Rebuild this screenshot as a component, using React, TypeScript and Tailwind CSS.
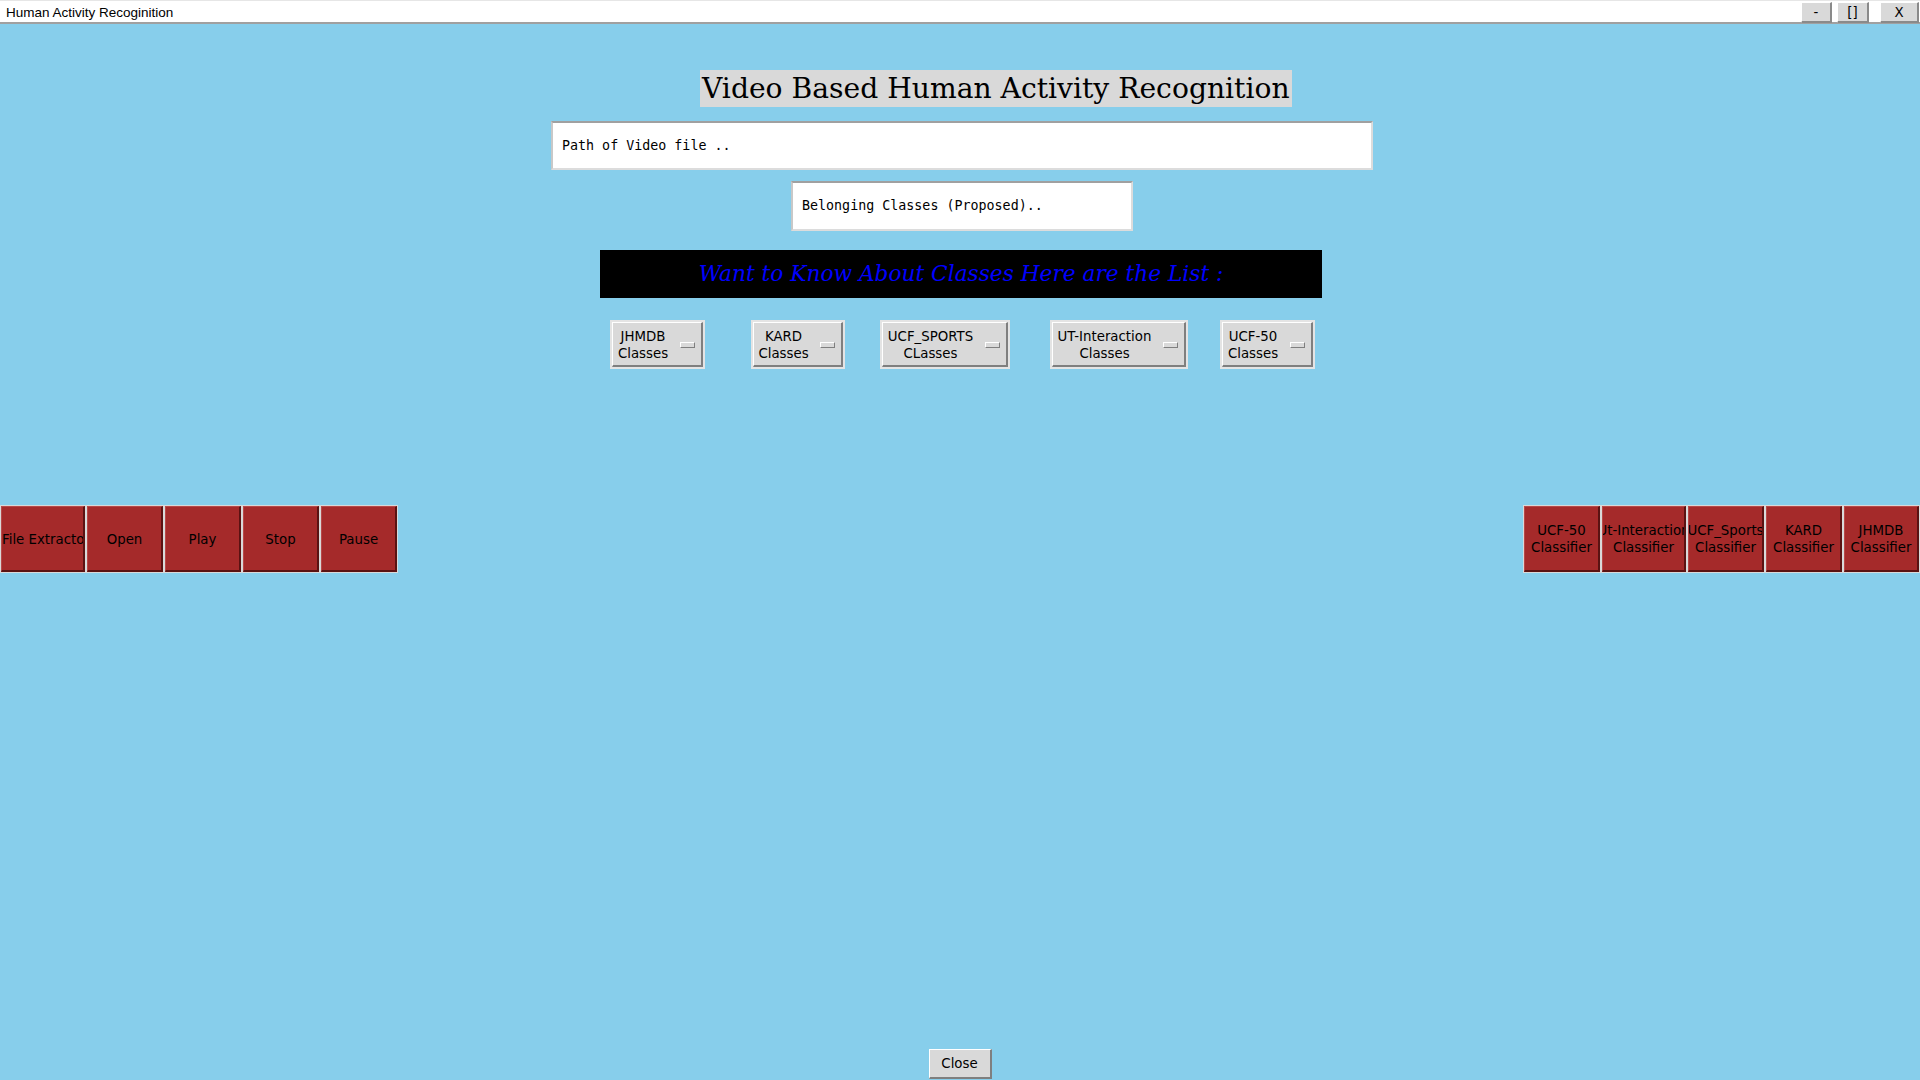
import React from "react";

const sans = { fontFamily: '"DejaVu Sans", Verdana, sans-serif' };
const serif = { fontFamily: '"DejaVu Serif", "Liberation Serif", serif' };
const mono = { fontFamily: '"DejaVu Sans Mono", "Liberation Mono", monospace' };

function MenuBtn({ lines, w, ml }: { lines: string[]; w: string; ml: string }) {
  return (
    <div className={`${w} ${ml} h-[49px] border-2 border-[#e4e4e4] shrink-0`}>
      <div className="h-full w-full bg-[#d9d9d9] border-t border-l border-t-white border-l-white border-b-2 border-r-2 border-b-[#7f7f7f] border-r-[#7f7f7f] flex items-center pl-0 pr-[6px] pt-[1px]">
        <div className="flex-1 text-center text-[13.33px] leading-[17px] text-black" style={sans}>
          {lines.map((l, i) => (
            <div key={i} className="whitespace-nowrap">{l}</div>
          ))}
        </div>
        <div className="w-[15px] h-[6px] bg-[#d9d9d9] border-t border-l border-t-white border-l-white border-b border-r border-b-[#7f7f7f] border-r-[#7f7f7f] ml-[7px] mt-[1px]" />
      </div>
    </div>
  );
}

function RedBtn({ lines, w, left }: { lines: string[]; w: string; left?: boolean }) {
  return (
    <div className={`${w} h-[68px] border border-[#d9d9d9] shrink-0`}>
      <div className={`h-full w-full bg-[#a52a2a] border-t border-l border-t-[#b84848] border-l-[#b84848] border-b-2 border-r-2 border-b-[#5a1212] border-r-[#5a1212] flex flex-col ${left ? "items-start pl-0" : "items-center"} justify-center pt-[1px] overflow-hidden text-[13.33px] leading-[17px] text-black`} style={sans}>
        {lines.map((l, i) => (
          <div key={i} className="whitespace-nowrap">{l}</div>
        ))}
      </div>
    </div>
  );
}

function TitleBtn({ label, w, ml }: { label: string; w: string; ml: string }) {
  return (
    <div className={`${w} ${ml} mt-[1px] h-[21px] bg-[#d9d9d9] border-t border-l border-t-white border-l-white border-b-2 border-r-2 border-b-[#8a8a8a] border-r-[#8a8a8a] flex items-center justify-center pt-[2px] text-[13.33px] text-black`} style={sans}>
      {label}
    </div>
  );
}

export default function App() {
  return (
    <div className="w-[1920px] h-[1080px] bg-[#87ceeb] flex flex-col overflow-hidden">
      {/* title bar */}
      <div className="h-[24px] bg-white border-t border-t-[#e6e6e6] border-b-2 border-b-[#a0a0a0] flex items-start shrink-0">
        <div className="pl-[6px] pt-[4px] text-[13.5px] leading-[16px] text-black flex-1" style={{ fontFamily: '"Liberation Sans", Arial, sans-serif' }}>
          Human Activity Recoginition
        </div>
        <TitleBtn label="-" w="w-[31px]" ml="ml-0" />
        <TitleBtn label="[]" w="w-[32px]" ml="ml-[5px]" />
        <TitleBtn label="X" w="w-[39px]" ml="ml-[11px]" />
        <div className="w-[1px]" />
      </div>

      {/* heading */}
      <div className="mt-[46px] ml-[700px] self-start h-[37px] bg-[#d9d9d9] px-[2px] pt-[2px] flex items-center text-[28.2px] text-black whitespace-nowrap" style={serif}>
        Video Based Human Activity Recognition
      </div>

      {/* path entry */}
      <div className="mt-[14px] ml-[551px] w-[822px] h-[49px] bg-white border-2 border-t-[#a0a0a0] border-l-[#c8c8c8] border-b-[#dcdcdc] border-r-[#dcdcdc] flex items-center pl-[9px] text-[13.33px] text-black" style={mono}>
        Path of Video file ..
      </div>

      {/* belonging entry */}
      <div className="mt-[11px] ml-[791px] w-[342px] h-[50px] bg-white border-2 border-t-[#a0a0a0] border-l-[#c8c8c8] border-b-[#dcdcdc] border-r-[#dcdcdc] flex items-center pl-[9px] text-[13.33px] text-black" style={mono}>
        Belonging Classes (Proposed)..
      </div>

      {/* banner */}
      <div className="mt-[19px] ml-[600px] w-[722px] h-[48px] bg-black flex items-center justify-center text-[21.7px] italic text-[#0000ff]" style={serif}>
        Want to Know About Classes Here are the List :
      </div>

      {/* menu buttons */}
      <div className="mt-[22px] flex pl-[610px]">
        <MenuBtn lines={["JHMDB", "Classes"]} w="w-[95px]" ml="ml-0" />
        <MenuBtn lines={["KARD", "Classes"]} w="w-[94px]" ml="ml-[46px]" />
        <MenuBtn lines={["UCF_SPORTS", "CLasses"]} w="w-[130px]" ml="ml-[35px]" />
        <MenuBtn lines={["UT-Interaction", "Classes"]} w="w-[138px]" ml="ml-[40px]" />
        <MenuBtn lines={["UCF-50", "Classes"]} w="w-[95px]" ml="ml-[32px]" />
      </div>

      {/* red buttons */}
      <div className="mt-[136px] flex justify-between">
        <div className="flex">
          <RedBtn lines={["File Extractor"]} w="w-[86px]" left />
          <RedBtn lines={["Open"]} w="w-[78px]" />
          <RedBtn lines={["Play"]} w="w-[78px]" />
          <RedBtn lines={["Stop"]} w="w-[78px]" />
          <RedBtn lines={["Pause"]} w="w-[78px]" />
        </div>
        <div className="flex">
          <RedBtn lines={["UCF-50", "Classifier"]} w="w-[78px]" />
          <RedBtn lines={["Ut-Interaction", "Classifier"]} w="w-[86px]" />
          <RedBtn lines={["UCF_Sports", "Classifier"]} w="w-[78px]" />
          <RedBtn lines={["KARD", "Classifier"]} w="w-[78px]" />
          <RedBtn lines={["JHMDB", "Classifier"]} w="w-[77px]" />
        </div>
      </div>

      {/* close */}
      <div className="mt-auto mb-[1px] self-center w-[63px] h-[30px] bg-[#d9d9d9] border-t border-l border-t-white border-l-white border-b-2 border-r-2 border-b-[#7f7f7f] border-r-[#7f7f7f] flex items-center justify-center text-[13.33px] text-black" style={sans}>
        Close
      </div>
    </div>
  );
}
